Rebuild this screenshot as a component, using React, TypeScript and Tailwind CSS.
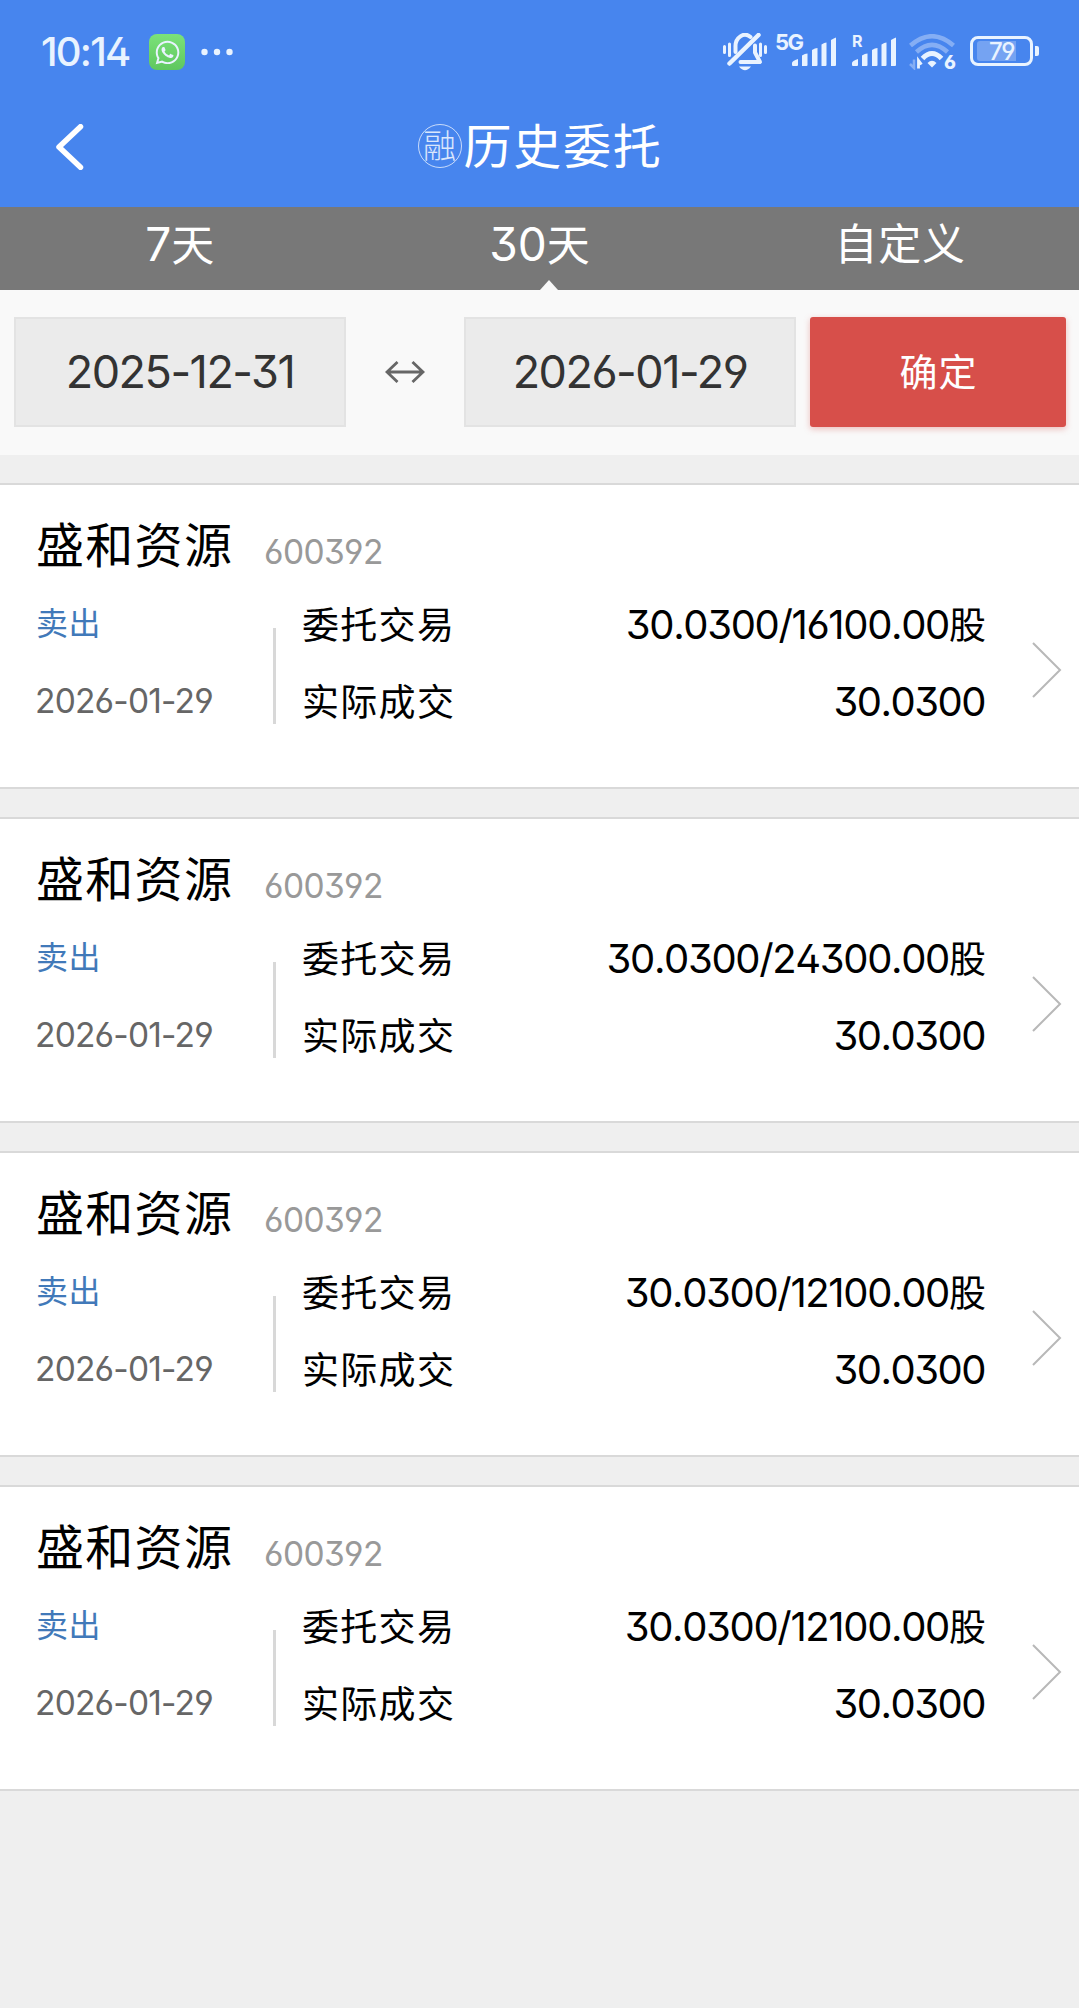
import { FaWhatsapp } from 'react-icons/fa';

interface Order {
    id: number;
    name: string;
    code: string;
    side: string;
    date: string;
    entrust: string;
    deal: string;
}

const orders: Order[] = [
    { id: 1, name: '盛和资源', code: '600392', side: '卖出', date: '2026-01-29', entrust: '30.0300/16100.00', deal: '30.0300' },
    { id: 2, name: '盛和资源', code: '600392', side: '卖出', date: '2026-01-29', entrust: '30.0300/24300.00', deal: '30.0300' },
    { id: 3, name: '盛和资源', code: '600392', side: '卖出', date: '2026-01-29', entrust: '30.0300/12100.00', deal: '30.0300' },
    { id: 4, name: '盛和资源', code: '600392', side: '卖出', date: '2026-01-29', entrust: '30.0300/12100.00', deal: '30.0300' },
];

const SignalBars = () => (
    <svg width="44" height="30" viewBox="0 0 44 30" fill="#e9f3ff">
        <path d="M0 29v-3q0-2 6-4v6q0 1-1 1H1q-1 0-1-1z" />
        <path d="M10 29V18.500q3-2 5.500-2V28q0 1-1 1z" />
        <path d="M20 29V13q3-2 5.500-2V28q0 1-1 1z" />
        <path d="M29.500 29V7.500q3-2 5-2V28q0 1-1 1z" />
        <path d="M39 29V3q3-2 5-2.500V28q0 1-1 1z" />
    </svg>
);

const StatusBar = () => (
    <div className="flex h-[104px] items-center pl-[41px] pr-[40px] text-[#e9f3ff]">
        <span className="w-[108px] text-[40px] font-medium leading-[104px] tracking-[-1.800px]">10:14</span>
        <div className="flex size-9 items-center justify-center rounded-[8px] bg-gradient-to-b from-[#7be279] to-[#5fc75f]">
            <FaWhatsapp className="size-[27px]" />
        </div>
        <svg className="ml-4" width="32" height="8" viewBox="0 0 32 8" fill="currentColor">
            <circle cx="3.500" cy="4" r="3.200" />
            <circle cx="16" cy="4" r="3.200" />
            <circle cx="28.500" cy="4" r="3.200" />
        </svg>
        <div className="ml-auto flex h-[38px] items-start">
            <svg width="44" height="38" viewBox="0 0 44 38" fill="none" stroke="currentColor" strokeWidth="3" strokeLinecap="round">
                <path d="M1.500 13.500v6M6.500 11v11.500M37.500 11v11.500M42.500 13.500v6" />
                <path d="M12.500 19V14a9.500 11.500 0 0 1 15-10" strokeWidth="4" />
                <path d="M6.500 30.500L35.500 2" strokeWidth="4.500" />
                <path d="M32 12.500v7l5 9.500H17.500" strokeWidth="4" strokeLinejoin="round" />
                <path d="M16 33.500h12q-6 7.500-12 0z" fill="currentColor" stroke="none" />
            </svg>
            <div className="ml-[8px] flex">
                <span className="w-[17px] text-[22px] font-bold leading-[18px] tracking-[-1.500px]">5G</span>
                <div className="mt-1"><SignalBars /></div>
            </div>
            <div className="relative ml-4 pt-1">
                <SignalBars />
                <span className="absolute left-0 top-[1px] text-[16px] font-bold leading-[15px]">R</span>
            </div>
            <div className="relative ml-[13px] mt-[1px]">
                <svg width="46" height="36" viewBox="0 0 46 36" fill="none" stroke="currentColor" strokeWidth="4.500">
                    <path d="M1.500 11.500Q23-7 44.500 11.500" opacity="0.380" />
                    <path d="M7.500 18Q23 3.600 38.500 18" opacity="0.380" />
                    <path d="M13.500 24.500Q23 14.500 32.500 24.500" strokeWidth="5" />
                    <path d="M18.500 29q4.500-4.500 9 0l-4.500 4.500z" fill="currentColor" stroke="none" />
                    <path d="M5 25.500v8.500l-4-4" strokeWidth="2.500" opacity="0.380" />
                    <path d="M9.500 34.500v-8l3 4" strokeWidth="2.800" />
                </svg>
                <span className="absolute -right-[1px] top-[20px] text-[19px] font-extrabold leading-[17px]">6</span>
            </div>
            <div className="ml-[15px] mt-[3px] flex items-center">
                <div className="relative flex h-[30px] w-[63px] items-center justify-center rounded-[8px] border-[3px] border-[#e9f3ff] p-1">
                    <div className="absolute left-1 top-[2px] h-[20px] w-[39px] rounded-l-[3px] bg-white/25" />
                    <span className="relative pt-[1px] text-[24px] font-medium leading-[24px] tracking-[-1.500px]">79</span>
                </div>
                <div className="ml-[2px] h-[10px] w-1 rounded-r-[2px] bg-[#e9f3ff]" />
            </div>
        </div>
    </div>
);

const Header = () => (
    <div className="flex h-[103px] items-start px-[56px]">
        <svg className="mt-5" width="28" height="46" viewBox="0 0 28 46" fill="none" stroke="white" strokeWidth="5.500" strokeLinecap="round" strokeLinejoin="round">
            <path d="M24.500 2.700L3 23l21.500 20.300" />
        </svg>
        <div className="flex flex-1 items-center justify-center pr-[27px] pt-[8px] text-white">
            <span className="-mt-[2px] flex size-[44px] items-center justify-center rounded-full border-[1.500px] border-white/70 text-[33px] font-light leading-none text-white/80">融</span>
            <span className="ml-[2px] text-[48px] leading-[70px] tracking-[1.700px]">历史委托</span>
        </div>
    </div>
);

const Tabs = () => (
    <div className="grid h-[83px] grid-cols-3 bg-[#787878] text-center text-[43px] leading-[74px] text-white">
        <div><span className="text-[46px]">7</span>天</div>
        <div className="relative">
            <span className="text-[46px]">30</span>天
            <svg className="absolute bottom-0 left-[180px]" width="18" height="10" viewBox="0 0 18 10" fill="#f9f9f9">
                <path d="M0 10L9 0l9 10z" />
            </svg>
        </div>
        <div className="pl-[2px] tracking-[0.800px]">自定义</div>
    </div>
);

const DateBox = ({ value }: { value: string }) => (
    <div className="h-[110px] w-[332px] border-2 border-[#e3e3e3] bg-[#ebebeb] text-center text-[45px] leading-[106px] tracking-[-1.500px] text-[#333]">
        {value}
    </div>
);

const DateFilter = () => (
    <div className="flex h-[165px] items-start bg-[#f9f9f9] pl-[14px] pt-[27px]">
        <DateBox value="2025-12-31" />
        <div className="flex h-[110px] w-[118px] items-center justify-center">
            <svg width="40" height="22" viewBox="0 0 40 22" fill="none" stroke="#666" strokeWidth="2.800">
                <path d="M2 11h36M12.500 1L2 11l10.500 10M27.500 1L38 11 27.500 21" />
            </svg>
        </div>
        <DateBox value="2026-01-29" />
        <button className="ml-[14px] h-[110px] w-[256px] rounded-[3px] bg-[#d74f4a] pl-[1px] text-[38px] leading-[108px] tracking-[1px] text-white shadow-[0_2px_6px_rgba(215,79,74,0.350)]">确定</button>
    </div>
);

const OrderCard = ({ order }: { order: Order }) => (
    <div className="h-[306px] border-y-2 border-[#d9d9d9] bg-white px-[36px] pt-5 text-black">
        <div className="flex h-[81px] items-center">
            <span className="w-[228px] text-[48px] leading-[81px] tracking-[1.300px]">{order.name}</span>
            <span className="mt-[13px] text-[33.500px] leading-[50px] tracking-[-0.600px] text-[#999]">{order.code}</span>
        </div>
        <div className="flex">
            <div className="w-[237px]">
                <div className="h-[77px] text-[32px] leading-[75px] tracking-[0.500px] text-[#4179b9]">{order.side}</div>
                <div className="-ml-[1px] text-[33.500px] leading-[77px] tracking-[-0.800px] text-[#666]">{order.date}</div>
            </div>
            <div className="mt-[42px] h-[96px] w-[3px] bg-[#d8d8d8]" />
            <div className="ml-[26px] w-[179px] pt-[1px] text-[37px] leading-[77px] tracking-[1.300px]">
                <div>委托交易</div>
                <div>实际成交</div>
            </div>
            <div className="flex-1 pt-[1px] text-right text-[40px] leading-[76px] [font-kerning:none]">
                <div className="-mr-[1px] h-[77px] tracking-[-1.350px]">{order.entrust}<span className="text-[37px] tracking-normal">股</span></div>
                <div className="tracking-[-1.500px]">{order.deal}</div>
            </div>
            <svg className="-mr-[20px] ml-[46px] mt-[56px]" width="32" height="56" viewBox="0 0 32 56" fill="none" stroke="#b8b8b8" strokeWidth="2">
                <path d="M2 1l27 27L2 55" />
            </svg>
        </div>
    </div>
);

const App = () => {
    return (
        <div className="min-h-[2008px] w-[1079px] overflow-hidden bg-[#efefef] font-['Inter','Noto_Sans_CJK_SC',sans-serif] [font-feature-settings:'cv09','ss01']">
            <div className="bg-[#4785ee]">
                <StatusBar />
                <Header />
            </div>
            <Tabs />
            <DateFilter />
            <div className="mt-7 flex flex-col gap-7">
                {orders.map(order => (
                    <OrderCard key={order.id} order={order} />
                ))}
            </div>
        </div>
    );
};

export default App;
